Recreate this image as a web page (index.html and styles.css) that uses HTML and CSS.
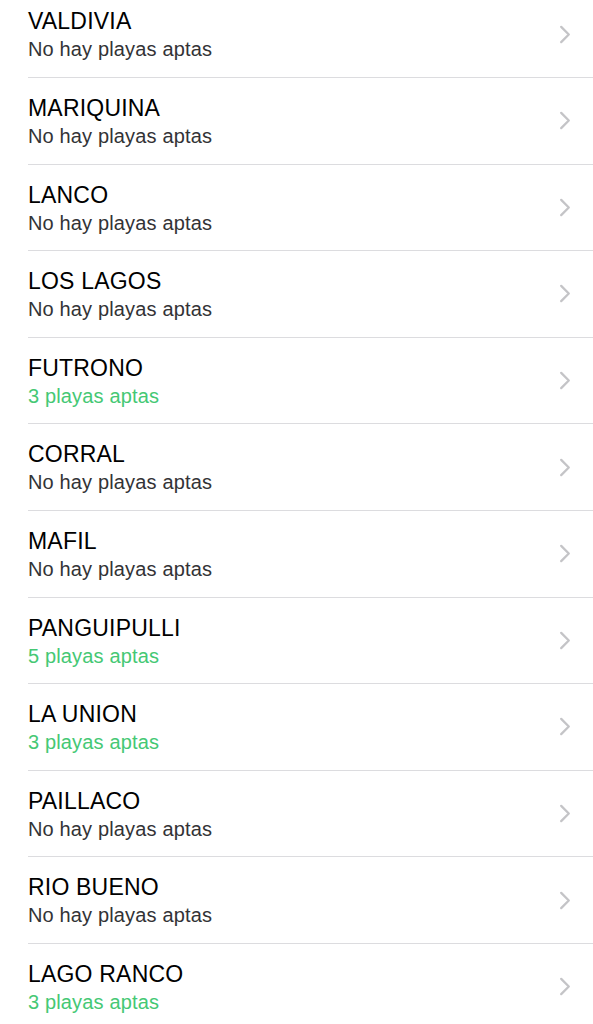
FILE: index.html
```html
<!DOCTYPE html>
<html lang="es">
<head>
  <meta charset="UTF-8" />
  <title>Comunas - Playas aptas</title>
  <link rel="stylesheet" href="styles.css">
</head>
<body>

  <ul class="list">
    <li class="row"><div class="row-inner"><div class="text"><div class="title">VALDIVIA</div><div class="sub">No hay playas aptas</div></div><svg class="chev" viewBox="0 0 12 20"><polyline points="2,2 10,10 2,18" /></svg></div></li>
    <li class="row"><div class="row-inner"><div class="text"><div class="title">MARIQUINA</div><div class="sub">No hay playas aptas</div></div><svg class="chev" viewBox="0 0 12 20"><polyline points="2,2 10,10 2,18" /></svg></div></li>
    <li class="row"><div class="row-inner"><div class="text"><div class="title">LANCO</div><div class="sub">No hay playas aptas</div></div><svg class="chev" viewBox="0 0 12 20"><polyline points="2,2 10,10 2,18" /></svg></div></li>
    <li class="row"><div class="row-inner"><div class="text"><div class="title">LOS LAGOS</div><div class="sub">No hay playas aptas</div></div><svg class="chev" viewBox="0 0 12 20"><polyline points="2,2 10,10 2,18" /></svg></div></li>
    <li class="row"><div class="row-inner"><div class="text"><div class="title">FUTRONO</div><div class="sub ok">3 playas aptas</div></div><svg class="chev" viewBox="0 0 12 20"><polyline points="2,2 10,10 2,18" /></svg></div></li>
    <li class="row"><div class="row-inner"><div class="text"><div class="title">CORRAL</div><div class="sub">No hay playas aptas</div></div><svg class="chev" viewBox="0 0 12 20"><polyline points="2,2 10,10 2,18" /></svg></div></li>
    <li class="row"><div class="row-inner"><div class="text"><div class="title">MAFIL</div><div class="sub">No hay playas aptas</div></div><svg class="chev" viewBox="0 0 12 20"><polyline points="2,2 10,10 2,18" /></svg></div></li>
    <li class="row"><div class="row-inner"><div class="text"><div class="title">PANGUIPULLI</div><div class="sub ok">5 playas aptas</div></div><svg class="chev" viewBox="0 0 12 20"><polyline points="2,2 10,10 2,18" /></svg></div></li>
    <li class="row"><div class="row-inner"><div class="text"><div class="title">LA UNION</div><div class="sub ok">3 playas aptas</div></div><svg class="chev" viewBox="0 0 12 20"><polyline points="2,2 10,10 2,18" /></svg></div></li>
    <li class="row"><div class="row-inner"><div class="text"><div class="title">PAILLACO</div><div class="sub">No hay playas aptas</div></div><svg class="chev" viewBox="0 0 12 20"><polyline points="2,2 10,10 2,18" /></svg></div></li>
    <li class="row"><div class="row-inner"><div class="text"><div class="title">RIO BUENO</div><div class="sub">No hay playas aptas</div></div><svg class="chev" viewBox="0 0 12 20"><polyline points="2,2 10,10 2,18" /></svg></div></li>
    <li class="row"><div class="row-inner"><div class="text"><div class="title">LAGO RANCO</div><div class="sub ok">3 playas aptas</div></div><svg class="chev" viewBox="0 0 12 20"><polyline points="2,2 10,10 2,18" /></svg></div></li>
  </ul>

</body>
</html>
```

FILE: styles.css
```css
body {
  margin: 0;
  background: #fff;
  font-family: 'Liberation Sans', Arial, sans-serif;
  overflow: hidden;
}

.list {
  list-style: none;
  margin: -8.6px 0 0 0;
  padding: 0;
}

.row {
  padding-left: 28px;
}

.row-inner {
  display: flex;
  align-items: flex-start;
  justify-content: space-between;
  height: 86.6px;
  box-sizing: border-box;
  border-bottom: 1px solid #dcdcdf;
  padding: 17px 22px 0 0;
}

.text {
  display: flex;
  flex-direction: column;
}

.title {
  font-size: 23px;
  line-height: 27px;
  letter-spacing: 0.2px;
  color: #000;
}

.sub {
  margin-top: 1px;
  font-size: 20px;
  line-height: 26px;
  letter-spacing: 0.15px;
  color: #333336;
}

.sub.ok {
  color: #45c874;
}

.chev {
  align-self: center;
  margin-top: -17px;
  width: 12px;
  height: 19px;
  fill: none;
  stroke: #c4c4c7;
  stroke-width: 2.4;
  stroke-linecap: round;
  stroke-linejoin: round;
}
```
